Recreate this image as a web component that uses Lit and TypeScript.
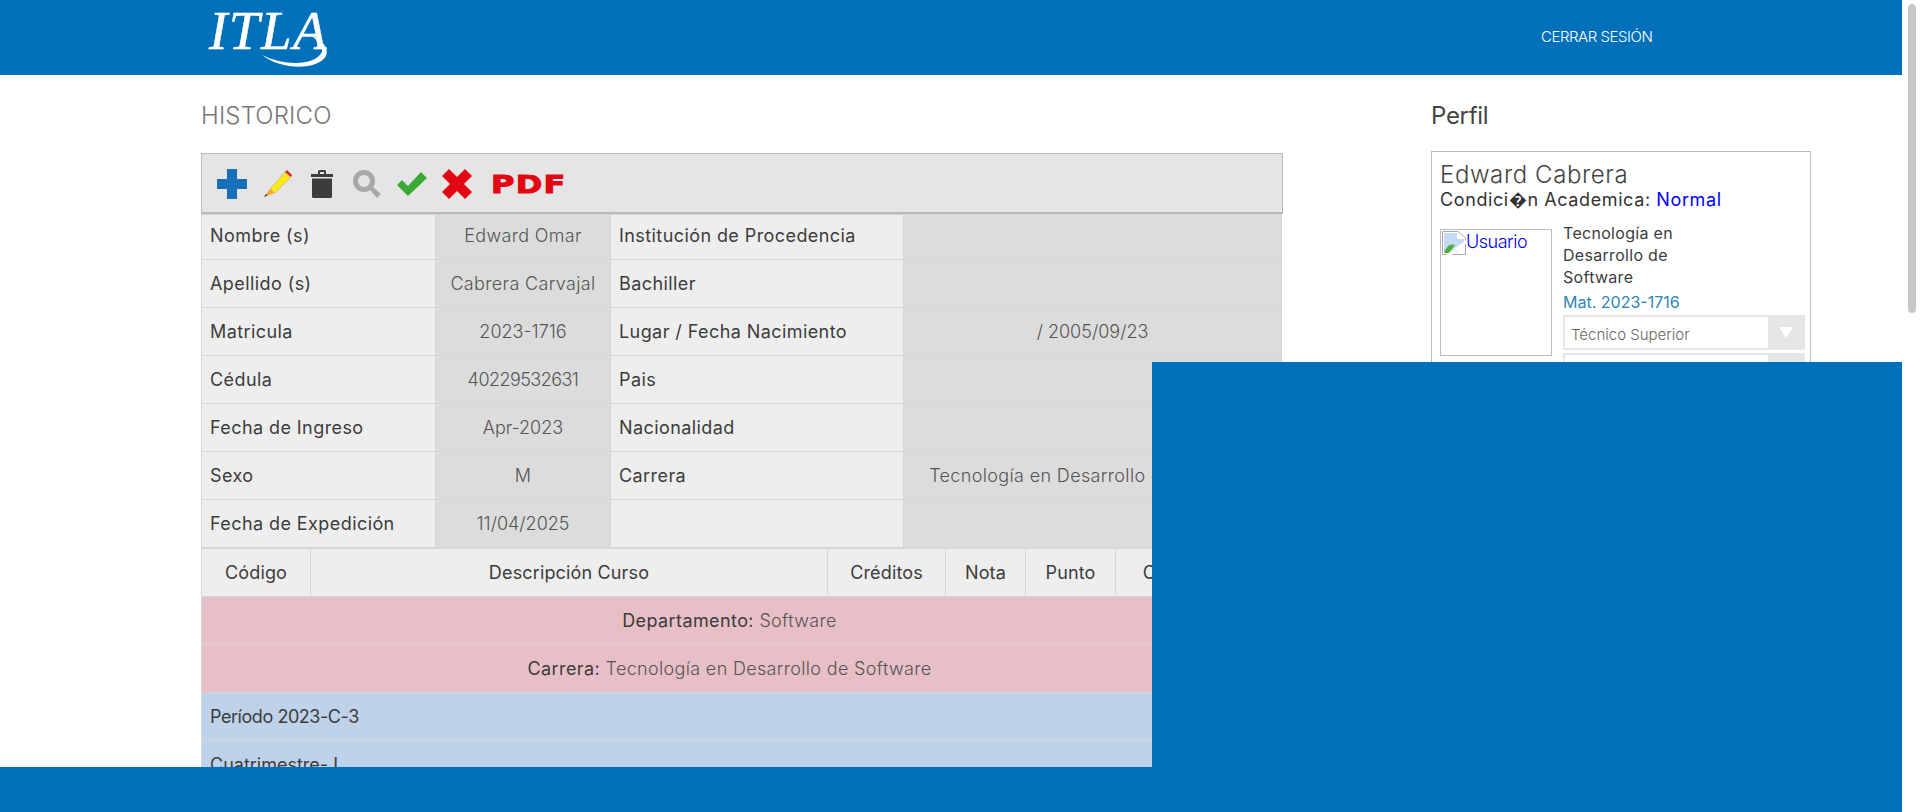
import { LitElement, css, html } from 'lit';
import { customElement } from 'lit/decorators.js';

const INFO = [
	['Nombre (s)', 'Edward Omar', 'Institución de Procedencia', ''],
	['Apellido (s)', 'Cabrera Carvajal', 'Bachiller', ''],
	['Matricula', '2023-1716', 'Lugar / Fecha Nacimiento', '/ 2005/09/23'],
	['Cédula', '40229532631', 'Pais', ''],
	['Fecha de Ingreso', 'Apr-2023', 'Nacionalidad', ''],
	['Sexo', 'M', 'Carrera', 'Tecnología en Desarrollo de Software'],
	['Fecha de Expedición', '11/04/2025', '', ''],
];

const COLS = ['Código', 'Descripción Curso', 'Créditos', 'Nota', 'Punto', 'Condición'];

@customElement('app-root')
export class AppRoot extends LitElement {

	static styles = css`
		:host {
			display: block;
			height: 812px;
			overflow: hidden;
			font-family: 'Inter', 'Lato', sans-serif;
			color: #444;
		}
		.shell { display: flex; height: 812px; }
		.page { position: relative; width: 1902px; height: 812px; overflow: hidden; background: #fff; flex: none; }
		.rail { flex: 1; background: #fff; padding: 4px 4px 0 6px; }
		.thumb { height: 309px; border-radius: 4px; background: #c8c8c8; }

		header { display: flex; height: 75px; background: #0070ba; padding-left: 209px; box-sizing: border-box; }
		.logo { position: relative; width: 124px; height: 75px; }
		.logo span {
			display: block;
			padding-top: 2px;
			font: italic 55px/58px 'Liberation Serif', serif;
			color: #fff;
			letter-spacing: 1.5px;
			-webkit-text-stroke: .5px #fff;
		}
		.logo svg { position: absolute; left: 0; top: 0; }
		.logout {
			margin-left: 1208px;
			line-height: 73px;
			font-size: 15px;
			font-weight: 300;
			color: #fff;
			letter-spacing: -.45px;
		}

		.content { display: flex; padding-left: 201px; }
		main { width: 1082px; padding-top: 26px; flex: none; }
		h1 {
			margin: 0 0 22px;
			font-size: 24px;
			line-height: 30px;
			font-weight: 300;
			color: #777;
			letter-spacing: .15px;
		}
		.toolbar {
			display: flex;
			align-items: center;
			height: 61px;
			box-sizing: border-box;
			background: #e5e5e5;
			border: 1px solid #b9b9b9;
			border-bottom-width: 2px;
			padding: 1px 0 0 15px;
		}
		.toolbar svg { display: block; flex: none; }
		.pdf {
			margin: 2px 0 0 19px;
			width: 72px;
			font: 900 24px/24px 'DejaVu Sans', sans-serif;
			-webkit-text-stroke: 1px #e30613;
			color: #e30613;
			letter-spacing: 1px;
			transform: scaleX(1.33);
			transform-origin: left center;
		}

		table { table-layout: fixed; border-collapse: collapse; font-size: 18px; }
		.info { width: 1080px; }
		.grades { width: 1056px; }
		td, th {
			border: 1px solid #d6d6d6;
			padding: 0 8px;
			height: 48px;
			box-sizing: border-box;
			white-space: nowrap;
			overflow: hidden;
			font-weight: 400;
		}
		.info tr:first-of-type td { height: 45px; padding-bottom: 3px; }
		.label { background: #eee; color: #3c3c3c; letter-spacing: .42px; }
		.value { background: #dcdcdc; color: #555; font-weight: 300; text-align: center; letter-spacing: .35px; }
		.value.num { letter-spacing: 0; }
		.value.long { letter-spacing: -.55px; }
		.grades th { background: #eee; color: #3c3c3c; letter-spacing: .15px; }
		.grades td.pink { background: #e8bfc7; text-align: center; letter-spacing: .4px; }
		.grades td.blue { background: #bed2e9; }
		.grades td { color: #3c3c3c; }
		.grades td.tight { letter-spacing: -.45px; }
		.grades .thin { font-weight: 300; color: #555; letter-spacing: .33px; }

		aside { margin-left: 148px; width: 380px; padding-top: 26px; flex: none; }
		h2 { margin: 0 0 20px; font-size: 24px; line-height: 30px; font-weight: 400; color: #444; letter-spacing: -.3px; }
		.card { border: 1px solid #bbb; padding: 9px 5px 8px 8px; height: 600px; box-sizing: border-box; }
		.name { font-size: 24px; line-height: 28px; font-weight: 300; color: #444; letter-spacing: .6px; }
		.cond { font-size: 18px; line-height: 22px; color: #333; letter-spacing: .6px; }
		.cond b { font-weight: 400; color: #00f; }
		.row { display: flex; gap: 11px; margin-top: 18px; }
		.photo { width: 112px; height: 127px; box-sizing: border-box; border: 1px solid #bbb; padding: 1px; display: flex; align-items: flex-start; flex: none; color: #00e; font-size: 18px; line-height: 22px; font-weight: 300; letter-spacing: -.5px; }
		.photo svg { flex: none; }
		.meta { flex: 1; margin-top: -7px; }
		.carrera { width: 130px; font-size: 16px; line-height: 22px; color: #3c3c3c; letter-spacing: .3px; }
		.mat { font-size: 16px; line-height: 26px; margin-top: 1px; color: #2e86b5; }
		.select {
			display: flex;
			height: 35px;
			box-sizing: border-box;
			border: 2px solid #e6e6e6;
			margin-bottom: 3px;
			font-size: 15px;
			font-weight: 300;
			color: #666;
			line-height: 31px;
		}
		.select span { flex: 1; padding: 2px 0 0 6px; }
		.arrow { width: 35px; background: #e6e6e6; display: flex; align-items: center; justify-content: center; }
		.arrow i { display: block; border: 7px solid transparent; border-top: 11px solid #fff; border-bottom: 0; }

		.cover { position: absolute; left: 1152px; top: 362px; right: 0; bottom: 0; background: #0070ba; }
		.footer { position: absolute; left: 0; right: 0; top: 767px; bottom: 0; background: #0070ba; }
	`

	valueClass(v: string) {
		if (/^\d+$/.test(v)) return 'value long';
		return /\d/.test(v) ? 'value num' : 'value';
	}

	render() {
		return html`
			<div class="shell">
				<div class="page">
					<header>
						<div class="logo">
							<span>ITLA</span>
							<svg width="124" height="75" viewBox="0 0 124 75" fill="none">
								<path d="M53 55 C72 70 108 71 117 56 C120 49 115 40 100 34 C110 41 114 47 113 52 C106 66 75 66 53 55 Z" fill="#fff"/>
							</svg>
						</div>
						<div class="logout">CERRAR SESIÓN</div>
					</header>
					<div class="content">
						<main>
							<h1>HISTORICO</h1>
							<div class="toolbar">
								${this.renderIcons()}
								<span class="pdf">PDF</span>
							</div>
							<table class="info">
								<colgroup><col style="width:234px"><col style="width:175px"><col style="width:293px"><col style="width:378px"></colgroup>
								${INFO.map(r => html`
									<tr>
										<td class="label">${r[0]}</td>
										<td class=${this.valueClass(r[1])}>${r[1]}</td>
										<td class="label">${r[2]}</td>
										<td class=${this.valueClass(r[3])}>${r[3]}</td>
									</tr>
								`)}
							</table>
							<table class="grades">
								<colgroup><col style="width:109px"><col style="width:517px"><col style="width:118px"><col style="width:80px"><col style="width:90px"><col style="width:142px"></colgroup>
								<tr>${COLS.map(c => html`<th>${c}</th>`)}</tr>
								<tr><td class="pink" colspan="6">Departamento: <span class="thin">Software</span></td></tr>
								<tr><td class="pink" colspan="6">Carrera: <span class="thin">Tecnología en Desarrollo de Software</span></td></tr>
								<tr><td class="blue tight" colspan="6">Período 2023-C-3</td></tr>
								<tr><td class="blue" colspan="6">Cuatrimestre- I</td></tr>
							</table>
						</main>
						<aside>
							<h2>Perfil</h2>
							<div class="card">
								<div class="name">Edward Cabrera</div>
								<div class="cond">Condici�n Academica: <b>Normal</b></div>
								<div class="row">
									<div class="photo">
										<svg width="24" height="24" viewBox="0 0 24 24">
											<path d="M.5.5H16L23.500 7V23.500H.5Z" fill="#fff" stroke="#a8a8a8"/>
											<path d="M2 2H15V8H22V14L14 22H2Z" fill="#c5daf3"/>
											<path d="M2 22C4 15 9 12 13 14L7 22Z" fill="#4cae3a"/>
											<path d="M4 24L24 9V13L10 24Z" fill="#fff"/>
										</svg>
										<span>Usuario</span>
									</div>
									<div class="meta">
										<div class="carrera">Tecnología en Desarrollo de Software</div>
										<div class="mat">Mat. 2023-1716</div>
										<div class="select"><span>Técnico Superior</span><div class="arrow"><i></i></div></div>
										<div class="select"><span></span><div class="arrow"><i></i></div></div>
									</div>
								</div>
							</div>
						</aside>
					</div>
					<div class="cover"></div>
					<div class="footer"></div>
				</div>
				<div class="rail"><div class="thumb"></div></div>
			</div>
		`
	}

	renderIcons() {
		return html`
			<svg width="30" height="30" viewBox="0 0 30 30" style="margin-right:16px"><path d="M10 0H20V10H30V20H20V30H10V20H0V10H10Z" fill="#1b6fba"/></svg>
			<svg width="29" height="29" viewBox="0 0 29 29" style="margin-right:19px">
				<path d="M7 20L22 3L28 8L12 24Z" fill="#ffe812" stroke="#b5b5a0" stroke-width=".7"/>
				<path d="M22 3L24 1L29 6L28 8Z" fill="#d8232a"/>
				<path d="M7 20L12 24L1 28Z" fill="#f9a932"/>
				<path d="M3 25L4.500 26.500L1 28Z" fill="#333"/>
			</svg>
			<svg width="22" height="28" viewBox="0 0 22 28" style="margin-right:20px">
				<path d="M0 4H7V1.500Q7 0 8.500 0H13.500Q15 0 15 1.500V4H22V7H0ZM9 2V4H13V2Z" fill="#3c3c3b" fill-rule="evenodd"/>
				<path d="M1 8.500H21V26.500Q21 28 19.500 28H2.500Q1 28 1 26.500Z" fill="#3c3c3b"/>
			</svg>
			<svg width="28" height="28" viewBox="0 0 28 28" style="margin-right:16px">
				<circle cx="11" cy="11" r="8.500" fill="none" stroke="#a8a8a8" stroke-width="5"/>
				<path d="M17 20L20 17L28 24L24 28Z" fill="#a8a8a8"/>
			</svg>
			<svg width="30" height="24" viewBox="0 0 30 24" style="margin-right:15px"><path d="M0 13L5 8L11 14L24 0L30 6L11 24Z" fill="#3aa935"/></svg>
			<svg width="30" height="30" viewBox="0 0 30 30"><path d="M7 0L15 8L23 0L30 7L22 15L30 23L23 30L15 22L7 30L0 23L8 15L0 7Z" fill="#e30613"/></svg>
		`
	}
}
